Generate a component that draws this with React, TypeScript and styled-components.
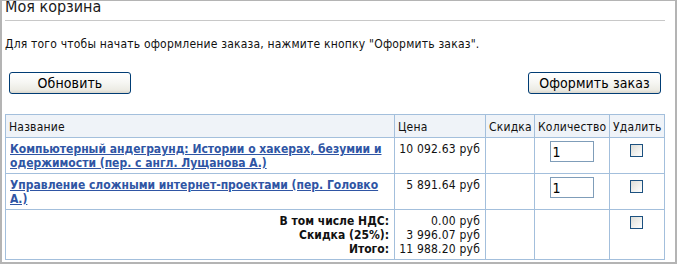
import React from "react";
import styled, { createGlobalStyle } from "styled-components";

const Global = createGlobalStyle`
  html, body { margin: 0; padding: 0; background: #fff; }
  body { font-family: "DejaVu Sans Condensed", "DejaVu Sans", sans-serif; font-size: 12px; letter-spacing: 0.2px; color: #000; }
`;

const Frame = styled.div`
  width: 677px;
  height: 264px;
  box-sizing: border-box;
  border: 2px solid #b4b4b4;
  border-top-width: 1px;
  padding: 0 10px 0 3px;
  overflow: hidden;
`;

const Title = styled.h1`
  display: inline-block;
  margin: -4px 0 0 0;
  padding-right: 4px;
  background: #fff;
  position: relative;
  font-size: 16px;
  line-height: 19px;
  letter-spacing: 0;
  font-weight: normal;
  color: #1a1a1a;
`;

const Rule = styled.div`
  margin-top: 4px;
  border-top: 1px solid #c8c8c8;
`;

const Intro = styled.p`
  margin: 16px 0 0 0;
  line-height: 14px;
  color: #111;
`;

const Actions = styled.div`
  display: flex;
  justify-content: space-between;
  padding: 0 4px;
  margin-top: 21px;
`;

const Button = styled.button<{ $w: number }>`
  width: ${(p) => p.$w}px;
  height: 22px;
  box-sizing: border-box;
  border: 1px solid #003c74;
  border-radius: 3px;
  background: linear-gradient(#ffffff 0%, #f7f7f4 45%, #ecebe4 85%, #d9d6cc 100%);
  font-family: "DejaVu Sans Condensed", "DejaVu Sans", sans-serif;
  font-size: 14px;
  letter-spacing: 0.1px;
  color: #000;
  padding: 0;
`;

const Table = styled.table`
  margin-top: 20px;
  width: 660px;
  border-collapse: collapse;
  table-layout: fixed;
  border: 1px solid #a3bfdc;
`;

const Head = styled.th`
  background: #eff3f8;
  border: 1px solid #a3bfdc;
  font-weight: normal;
  text-align: left;
  padding: 5px 2px 3px 3px;
  line-height: 14px;
  color: #111;
  white-space: nowrap;
  overflow: hidden;
`;

const Cell = styled.td<{ $align?: string }>`
  border: 1px solid #a3bfdc;
  vertical-align: top;
  padding: 4px 5px 3px 4px;
  line-height: 14px;
  text-align: ${(p) => p.$align || "left"};
  color: #111;
`;

const NameCell = styled(Cell)`
  padding-right: 3px;
`;

const BookLink = styled.a`
  color: #2f55a4;
  font-weight: bold;
  letter-spacing: 0;
  text-decoration: underline;
`;

const Qty = styled.input`
  width: 44px;
  height: 21px;
  box-sizing: border-box;
  margin: -1px 0 0 0;
  border: 1px solid #7f9db9;
  padding: 1px 2px;
  font-family: "DejaVu Sans Condensed", "DejaVu Sans", sans-serif;
  font-size: 14px;
  color: #000;
  text-align: left;
`;

const Check = styled.span`
  display: inline-block;
  width: 13px;
  height: 13px;
  box-sizing: border-box;
  margin-top: 2px;
  border: 1px solid #1c5180;
  background: linear-gradient(135deg, #dcdcd7 0%, #f2f2ef 60%, #ffffff 100%);
`;

const Totals = styled.div`
  font-weight: bold;
  letter-spacing: 0;
`;

const items = [
  {
    title: "Компьютерный андеграунд: Истории о хакерах, безумии и одержимости (пер. с англ. Лущанова А.)",
    price: "10 092.63 руб",
  },
  {
    title: "Управление сложными интернет-проектами (пер. Головко А.)",
    price: "5 891.64 руб",
  },
];

export default function App() {
  return (
    <>
      <Global />
      <Frame>
        <Title>Моя корзина</Title>
        <Rule />
        <Intro>Для того чтобы начать оформление заказа, нажмите кнопку "Оформить заказ".</Intro>
        <Actions>
          <Button $w={122}>Обновить</Button>
          <Button $w={133}>Оформить заказ</Button>
        </Actions>
        <Table>
          <colgroup>
            <col style={{ width: 389 }} />
            <col style={{ width: 91 }} />
            <col style={{ width: 49 }} />
            <col style={{ width: 75 }} />
            <col style={{ width: 55 }} />
          </colgroup>
          <thead>
            <tr>
              <Head>Название</Head>
              <Head>Цена</Head>
              <Head>Скидка</Head>
              <Head>Количество</Head>
              <Head>Удалить</Head>
            </tr>
          </thead>
          <tbody>
            {items.map((it) => (
              <tr key={it.title}>
                <NameCell>
                  <BookLink href="#">{it.title}</BookLink>
                </NameCell>
                <Cell $align="right">{it.price}</Cell>
                <Cell />
                <Cell $align="center">
                  <Qty defaultValue="1" />
                </Cell>
                <Cell $align="center">
                  <Check />
                </Cell>
              </tr>
            ))}
            <tr>
              <Cell $align="right">
                <Totals>
                  В том числе НДС:
                  <br />
                  Скидка (25%):
                  <br />
                  Итого:
                </Totals>
              </Cell>
              <Cell $align="right">
                0.00 руб
                <br />
                3 996.07 руб
                <br />
                11 988.20 руб
              </Cell>
              <Cell />
              <Cell />
              <Cell $align="center">
                <Check />
              </Cell>
            </tr>
          </tbody>
        </Table>
      </Frame>
    </>
  );
}
